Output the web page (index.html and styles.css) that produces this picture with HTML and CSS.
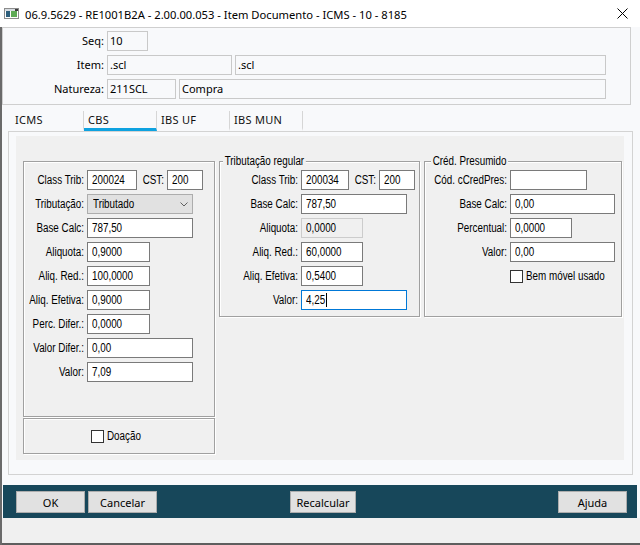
FILE: index.html
```html
<!DOCTYPE html>
<html lang="pt">
<head>
<meta charset="utf-8">
<title>Item Documento</title>
<link rel="stylesheet" href="styles.css">
</head>
<body>
<div class="window">
  <div class="titlebar">
    <svg class="app-icon" width="15" height="11" viewBox="0 0 15 11">
      <rect x="0.5" y="0.5" width="14" height="10" fill="#ffffff" stroke="#8c8c8c"/>
      <rect x="1" y="1" width="13" height="2" fill="#d8dde2"/>
      <rect x="2" y="3" width="4" height="6" fill="#2e5f7c"/>
      <rect x="7" y="3" width="6" height="6" fill="#5faa55"/>
      <rect x="11" y="1" width="3" height="2" fill="#3c3c3c"/>
    </svg>
    <span class="title">06.9.5629 - RE1001B2A - 2.00.00.053 - Item Documento - ICMS - 10 - 8185</span>
    <svg class="close" width="11" height="11" viewBox="0 0 11 11">
      <path d="M0.5 0.5 L10.5 10.5 M10.5 0.5 L0.5 10.5" stroke="#000" stroke-width="1" fill="none"/>
    </svg>
  </div>

  <div class="frame">
    <div class="client">
      <div class="header-group">
        <div class="hrow"><span class="hlabel">Seq:</span><span class="hfield w41">10</span></div>
        <div class="hrow"><span class="hlabel">Item:</span><span class="hfield w125">.scl</span><span class="hfield w371">.scl</span></div>
        <div class="hrow"><span class="hlabel">Natureza:</span><span class="hfield w69">211SCL</span><span class="hfield w427">Compra</span></div>
      </div>

      <div class="tabs">
        <div class="tab">ICMS</div>
        <div class="tab active">CBS</div>
        <div class="tab">IBS UF</div>
        <div class="tab">IBS MUN</div>
      </div>

      <div class="panel">
        <div class="panel-inner">
          <div class="col-left">
            <div class="group-box left-group">
              <div class="rows">
                <div class="row"><span class="lbl">Class Trib:</span><span class="fld w50"><span class="tx">200024</span></span><span class="lbl cst">CST:</span><span class="fld w36"><span class="tx">200</span></span></div>
                <div class="row"><span class="lbl">Tributação:</span><span class="sel w106"><span class="tx">Tributado</span><svg width="8" height="5" viewBox="0 0 8 5"><polyline points="0.5,0.5 4,4 7.5,0.5" fill="none" stroke="#606060" stroke-width="1"/></svg></span></div>
                <div class="row"><span class="lbl">Base Calc:</span><span class="fld w106"><span class="tx">787,50</span></span></div>
                <div class="row"><span class="lbl">Aliquota:</span><span class="fld w63"><span class="tx">0,9000</span></span></div>
                <div class="row"><span class="lbl">Aliq. Red.:</span><span class="fld w63"><span class="tx">100,0000</span></span></div>
                <div class="row"><span class="lbl">Aliq. Efetiva:</span><span class="fld w63"><span class="tx">0,9000</span></span></div>
                <div class="row"><span class="lbl">Perc. Difer.:</span><span class="fld w63"><span class="tx">0,0000</span></span></div>
                <div class="row"><span class="lbl">Valor Difer.:</span><span class="fld w106"><span class="tx">0,00</span></span></div>
                <div class="row"><span class="lbl">Valor:</span><span class="fld w106"><span class="tx">7,09</span></span></div>
              </div>
            </div>
            <div class="group-box doacao">
              <span class="chk"></span><span class="tx">Doação</span>
            </div>
          </div>

          <div class="group-box mid-group">
            <span class="gtitle gt-mid">Tributação regular</span>
            <div class="rows">
              <div class="row"><span class="lbl">Class Trib:</span><span class="fld w48"><span class="tx">200034</span></span><span class="lbl cst">CST:</span><span class="fld w36"><span class="tx">200</span></span></div>
              <div class="row"><span class="lbl">Base Calc:</span><span class="fld w106"><span class="tx">787,50</span></span></div>
              <div class="row"><span class="lbl">Aliquota:</span><span class="fld w62 disabled"><span class="tx">0,0000</span></span></div>
              <div class="row"><span class="lbl">Aliq. Red.:</span><span class="fld w62"><span class="tx">60,0000</span></span></div>
              <div class="row"><span class="lbl">Aliq. Efetiva:</span><span class="fld w62"><span class="tx">0,5400</span></span></div>
              <div class="row"><span class="lbl">Valor:</span><span class="fld w106 focus"><span class="tx">4,25</span><span class="caret"></span></span></div>
            </div>
          </div>

          <div class="group-box right-group">
            <span class="gtitle gt-right">Créd. Presumido</span>
            <div class="rows">
              <div class="row"><span class="lbl">Cód. cCredPres:</span><span class="fld w77"></span></div>
              <div class="row"><span class="lbl">Base Calc:</span><span class="fld w105"><span class="tx">0,00</span></span></div>
              <div class="row"><span class="lbl">Percentual:</span><span class="fld w62"><span class="tx">0,0000</span></span></div>
              <div class="row"><span class="lbl">Valor:</span><span class="fld w105"><span class="tx">0,00</span></span></div>
              <div class="row"><span class="lbl"></span><span class="chk"></span><span class="tx">Bem móvel usado</span></div>
            </div>
          </div>
        </div>
      </div>
    </div>

    <div class="buttonbar">
      <span class="btn">OK</span>
      <span class="btn">Cancelar</span>
      <span class="btn recalc">Recalcular</span>
      <span class="btn ajuda">Ajuda</span>
    </div>
    <div class="footer"></div>
  </div>
</div>
</body>
</html>
```

FILE: styles.css
```css
* { box-sizing: border-box; }
html, body { margin: 0; padding: 0; }
body {
  width: 640px;
  height: 545px;
  overflow: hidden;
  background: #f8f9fb;
  font-family: "Noto Sans", "DejaVu Sans", sans-serif;
  font-size: 11px;
  color: #000;
}
.window {
  width: 640px;
  height: 545px;
  display: flex;
  flex-direction: column;
}

/* title bar */
.titlebar {
  flex: none;
  height: 27px;
  background: #ffffff;
  display: flex;
  align-items: center;
}
.app-icon { margin-left: 4px; margin-right: 6px; flex: none; }
.title { flex: 1; font-size: 11.2px; white-space: nowrap; padding-top: 1px; }
.close { margin-right: 12px; flex: none; }

/* frame */
.frame {
  flex: 1;
  display: flex;
  flex-direction: column;
  border-left: 2px solid #6a6a6a;
  background: #f8f9fb;
}
.client { height: 458px; }

/* header */
.header-group {
  width: 629px;
  height: 78px;
  border: 1px solid #cfcfcf;
  padding-top: 3px;
  display: flex;
  flex-direction: column;
  gap: 4px;
}
.hrow { display: flex; gap: 3px; height: 20px; }
.hlabel { width: 101px; text-align: right; line-height: 20px; white-space: nowrap; }
.hfield {
  height: 20px;
  border: 1px solid #c9c9c9;
  padding-left: 2px;
  line-height: 18px;
  white-space: nowrap;
}

/* tabs */
.tabs { height: 26px; display: flex; padding: 6px 0 0 9px; }
.tab {
  width: 73px;
  height: 20px;
  border-right: 1px solid #d6d6d6;
  border-bottom: 3px solid transparent;
  padding-left: 4px;
  line-height: 17px;
  font-size: 11px;
  color: #111;
  letter-spacing: 0.3px;
}
.tab.active { border-bottom-color: #0ea2e0; }

/* panel */
.panel {
  margin-left: 6px;
  width: 625px;
  height: 344px;
  border: 1px solid #d3d3d3;
  padding: 4px 8px 0 7px;
}
.panel-inner {
  height: 324px;
  background: #f0f0f0;
  display: flex;
  align-items: flex-start;
  gap: 4px;
  padding: 25px 0 0 7px;
  font-family: "Liberation Sans", Arial, sans-serif;
  font-size: 12px;
  color: #000;
}

/* narrow text: Arial Narrow proportions */
.tx {
  display: inline-block;
  white-space: nowrap;
  transform: scaleX(0.82);
  transform-origin: left center;
}

.group-box {
  border: 1px solid #a0a0a0;
  box-shadow: inset 1px 1px 0 #ffffff, 1px 1px 0 #ffffff;
}
.col-left { display: flex; flex-direction: column; gap: 1px; }
.left-group { width: 192px; height: 256px; padding-top: 8px; }
.doacao {
  width: 192px;
  height: 36px;
  display: flex;
  align-items: center;
  gap: 3px;
  padding-left: 67px;
}
.mid-group { position: relative; width: 201px; height: 156px; padding-top: 8px; }
.right-group { position: relative; width: 198px; height: 156px; padding-top: 8px; }

.gtitle {
  position: absolute;
  top: -8px;
  line-height: 14px;
  padding: 0 2px;
  background: #f0f0f0;
  white-space: nowrap;
  transform: scaleX(0.82);
  transform-origin: left center;
}
.gt-mid { left: 3px; }
.gt-right { left: 6px; }

.rows { display: flex; flex-direction: column; gap: 4px; }
.row { display: flex; align-items: center; gap: 3px; height: 20px; }
.lbl {
  flex: none;
  display: flex;
  justify-content: flex-end;
  white-space: nowrap;
  transform: scaleX(0.82);
  transform-origin: right center;
}
.left-group .lbl { width: 60px; }
.mid-group .lbl { width: 78px; }
.right-group .lbl { width: 82px; }
.left-group .lbl.cst, .mid-group .lbl.cst { width: 24px; }

.fld {
  flex: none;
  height: 20px;
  background: #ffffff;
  border: 1px solid #7a7a7a;
  padding-left: 4px;
  line-height: 18px;
  white-space: nowrap;
  overflow: hidden;
}
.fld.disabled { background: #f0f0f0; border-color: #cccccc; }
.fld.focus { border-color: #0078d7; display: flex; align-items: center; }
.caret { flex: none; width: 1px; height: 14px; background: #000; margin-left: -3px; }

.sel {
  flex: none;
  height: 20px;
  background: #e1e1e1;
  border: 1px solid #adadad;
  padding: 0 4px 0 5px;
  display: flex;
  align-items: center;
  justify-content: space-between;
}

.w36 { width: 36px; }
.w41 { width: 41px; }
.w48 { width: 48px; }
.w50 { width: 50px; }
.w62 { width: 62px; }
.w63 { width: 63px; }
.w69 { width: 69px; }
.w77 { width: 77px; }
.w105 { width: 105px; }
.w106 { width: 106px; }
.w125 { width: 125px; }
.w371 { width: 371px; }
.w427 { width: 427px; }

.chk {
  flex: none;
  width: 13px;
  height: 13px;
  background: #ffffff;
  border: 1px solid #333333;
}

/* button bar */
.buttonbar {
  flex: none;
  height: 33px;
  margin: 0 3px 0 1px;
  background: #17475a;
  display: flex;
  align-items: flex-start;
  gap: 3px;
  padding: 6px 10px 0 13px;
}
.btn {
  width: 69px;
  height: 22px;
  background: #e1e1e1;
  border: 1px solid #adadad;
  display: flex;
  align-items: center;
  justify-content: center;
  font-size: 11px;
  white-space: nowrap;
}
.btn.recalc { width: 66px; margin-left: 130px; }
.btn.ajuda { margin-left: auto; }

.footer {
  flex: 1;
  background: #f0f0f0;
  border-bottom: 2px solid #5e5e5e;
}
```
